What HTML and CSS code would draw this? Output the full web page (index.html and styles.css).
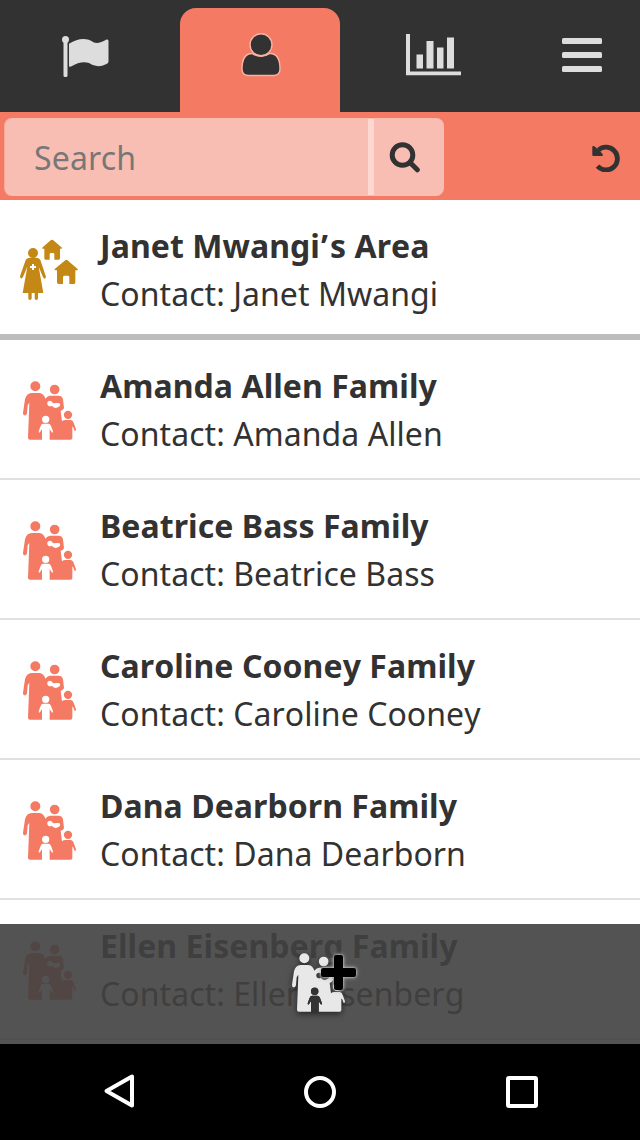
FILE: index.html
```html
<!DOCTYPE html>
<html lang="en">
<head>
<meta charset="utf-8">
<title>Contacts</title>
<link rel="stylesheet" href="styles.css">
</head>
<body>
<svg class="defs" width="0" height="0">
  <symbol id="family" viewBox="30 30 180 180">
    <path d="M76 34a15 15 0 1 1 0 30a15 15 0 1 1 0-30ZM134 44a14.500 14.500 0 1 1 0 29a14.500 14.500 0 1 1 0-29ZM174 122a12.500 12.500 0 1 1 0 25a12.500 12.500 0 1 1 0-25Z"/>
    <path fill-rule="evenodd" d="M65 69H88Q102 71 106 86Q111 78 120 77H146Q157 78 159 88L162 114Q162 119 152 123L156 154Q160 150 166 150H183Q190 152 192 161L198 178Q199 183 194 183L189 170H187V204Q187 209 182 209H60Q54 209 54 203L58 98L53 106L51 130Q49 137 43 136Q38 134 39 128L45 88Q49 70 65 69ZM99 161H115Q121 161 123 168L129 184Q129 191 125 187L119 177V209H96V177L90 187Q86 191 86 184L92 168Q94 161 99 161ZM107 137a11 11 0 1 0 0 22a11 11 0 1 0 0-22ZM120 92a8.500 8.500 0 1 0 5 15.500Q134 119 149 109Q154 99 144 99L129 100Q127 92 120 92Z"/>
  </symbol>
</svg>
<div class="screen">
  <header class="tabs">
    <a class="tab tab-flag"><svg width="48" height="44" viewBox="0 0 48 44"><circle cx="3.500" cy="3.500" r="3.500"/><rect x="1.500" y="3" width="4" height="38" rx="1.500"/><path d="M7 7.800Q21 -1 32 6.500Q37 8 44.500 3.500Q46.500 3 46.500 5V25.500Q46.500 27 44.500 28Q35 33 27 27Q19 24.500 9 30.500Q7 31.500 7 29.500Z"/></svg></a>
    <a class="tab tab-person"><svg width="42" height="46" viewBox="0 0 42 46"><path d="M12 21.500C5 21.500 2 28 2 37Q2 43 8 43.500H34Q40 43 40 37C40 28 37 21.500 30 21.500Q21 27 12 21.500Z"/><circle cx="21" cy="12.800" r="11"/></svg></a>
    <a class="tab tab-chart"><svg width="55" height="42" viewBox="0 0 55 42"><path d="M0 0H4V37.500H55V41.200H0ZM10.500 20.500H17V34.500H10.500ZM20.500 7H27.500V34.500H20.500ZM31 13.500H37.500V34.500H31ZM41 3.500H48V34.500H41Z"/></svg></a>
    <a class="tab tab-menu"><svg width="40" height="34" viewBox="0 0 40 34"><rect width="40" height="6" rx="1.500"/><rect y="14" width="40" height="6" rx="1.500"/><rect y="28" width="40" height="6" rx="1.500"/></svg></a>
  </header>
  <div class="toolbar">
    <div class="search">
      <input class="search-input" type="text" placeholder="Search">
      <span class="separator"></span>
      <button class="search-button" aria-label="Search"><svg width="32" height="32" viewBox="0 0 32 32"><circle cx="13.500" cy="14" r="10.300"/><path d="M21 21.500L28.300 28.800"/></svg></button>
    </div>
    <button class="reset" aria-label="Reset"><svg width="30" height="30" viewBox="0 0 30 30"><path class="arc" d="M7.500 8A11.400 11.400 0 1 1 6.500 24.200"/><path d="M1.300 5Q1.300 3.500 3 4L6 6.500L9 9L11.500 12Q12.500 14 10.500 14H2.500Q1.300 14 1.300 13Z"/></svg></button>
  </div>
  <main class="contacts">
    <div class="contact area">
      <svg class="icon" viewBox="30 45 180 180"><path d="M69 69a15 15 0 1 1 0 30a15 15 0 1 1 0-30ZM58 98H80Q88 99 91 105L107 152Q109 158 105 161Q101 161 99 157L86 125L100 204H84V220Q84 225 79 225Q74 225 74 220V204H65V220Q65 225 60 225Q55 225 55 220V204H38L52 125L39 156Q37 161 32 160Q29 157 31 151L47 105Q50 99 58 98Z"/><path class="cross" d="M66 117H72V123H78V129H72V135H66V129H60V123H66Z"/><path d="M126 44Q128 44 130 46L156 68Q157 70 153 71H150V100Q150 104 146 104H133V88Q133 84 129 84H123Q119 84 119 88V104H106Q103 104 103 100V71H98Q95 70 98 67L122 46Q124 44 126 44ZM169 104Q171 104 174 107L203 132Q205 135 201 136H196V172Q196 177 192 177H178V157Q178 152 174 152H163Q159 152 159 157V177H146Q141 177 141 172V136H136Q132 135 135 131L164 107Q167 104 169 104Z"/></svg>
      <div class="text"><h2>Janet Mwangi<span class="apostrophe">’</span>s Area</h2><p>Contact: Janet Mwangi</p></div>
    </div>
    <div class="contact"><svg class="icon"><use href="#family"/></svg><div class="text"><h2>Amanda Allen Family</h2><p>Contact: Amanda Allen</p></div></div>
    <div class="contact"><svg class="icon"><use href="#family"/></svg><div class="text"><h2>Beatrice Bass Family</h2><p>Contact: Beatrice Bass</p></div></div>
    <div class="contact"><svg class="icon"><use href="#family"/></svg><div class="text"><h2>Caroline Cooney Family</h2><p>Contact: Caroline Cooney</p></div></div>
    <div class="contact"><svg class="icon"><use href="#family"/></svg><div class="text"><h2>Dana Dearborn Family</h2><p>Contact: Dana Dearborn</p></div></div>
    <div class="contact"><svg class="icon"><use href="#family"/></svg><div class="text"><h2>Ellen Eisenberg Family</h2><p>Contact: Ellen Eisenberg</p></div></div>
    <div class="actions">
      <div class="add"><svg class="add-family" width="60" height="60"><use href="#family"/><path class="add-child" d="M25.700 35.500a3.800 3.800 0 1 1 0 7.600a3.800 3.800 0 1 1 0-7.600ZM23 43.700H28.500Q30 44 31 46L33 51.500Q32.500 53 31.500 52L29.700 49V59.700H22V49L20 52Q19 53 18.700 51.500L20.500 46Q21.500 44 23 43.700Z"/></svg><svg class="plus" width="40" height="40" viewBox="0 0 40 40"><path d="M17 2H23Q25 2 25 4V15H36Q38 15 38 17V22Q38 24 36 24H25V35Q25 37 23 37H18Q16 37 16 35V24H5Q3 24 3 22V17Q3 15 5 15H16V4Q16 2 18 2Z"/></svg></div>
    </div>
  </main>
  <nav class="system">
    <svg width="34" height="38" viewBox="0 0 34 38"><path d="M31 3.500V32.500L5.500 18Z"/></svg>
    <svg width="34" height="34" viewBox="0 0 34 34"><circle cx="17" cy="17" r="14"/></svg>
    <svg width="34" height="34" viewBox="0 0 34 34"><rect x="3" y="3" width="28" height="28" rx="1"/></svg>
  </nav>
</div>
</body>
</html>
```
FILE: styles.css
```css
* { box-sizing: border-box; }
body { margin: 0; color: #323232; font-family: "Noto Sans", sans-serif; font-kerning: none; }
svg { display: block; flex: none; }
.defs { position: absolute; }
button { border: 0; padding: 0; background: none; }
.screen { width: 640px; height: 1140px; display: flex; flex-direction: column; overflow: hidden; background: #fff; }
.tabs { height: 112px; flex: none; display: flex; padding-top: 8px; background: #323232; fill: #ddd; }
.tab { width: 160px; height: 104px; flex: none; }
.tab-flag { width: 180px; padding: 28px 0 0 62px; }
.tab-person { padding: 24px 0 0 60px; background: #f47a63; border-radius: 16px 16px 0 0; fill: #323232; stroke: #f9b3a5; stroke-width: 1.4; }
.tab-chart { width: 184px; padding: 26px 0 0 66px; }
.tab-menu { width: 116px; padding: 30px 0 0 38px; }
.toolbar { height: 88px; flex: none; display: flex; justify-content: space-between; align-items: center; padding: 2px 19px 0 4px; background: #f47a63; }
.search { width: 440px; height: 78px; display: flex; align-items: center; border: 1px solid #f8aa9b; border-width: 0 0 0 1px; border-radius: 8px; background: #f8beb3; }
.search-input { width: 363px; height: 78px; padding: 0 0 0 29px; border: 0; outline: 0; background: none; font: 32px "Noto Sans", sans-serif; letter-spacing: .15px; }
.search-input::placeholder { color: #777; opacity: 1; }
.separator { width: 6px; height: 76px; background: #fcd8d0; }
.search-button { flex: 1; padding-left: 15px; }
.search-button svg { fill: none; stroke: #323232; stroke-width: 5; stroke-linecap: round; }
.reset { fill: #323232; }
.reset .arc { fill: none; stroke: #323232; stroke-width: 4.8; }
.contacts { height: 844px; flex: none; position: relative; overflow: hidden; }
.contact { height: 140px; display: flex; gap: 20px; padding: 22px 20px 0; border-bottom: 2px solid #e0e0e0; }
.contact.area { border-bottom: 6px solid #bdbdbd; }
.icon { width: 60px; height: 60px; margin-top: 18px; fill: #f47a63; }
.area .icon { fill: #c38816; overflow: visible; }
.area .cross { fill: #fff; }
.text h2, .text p { margin: 0; font-size: 32px; line-height: 48px; white-space: nowrap; letter-spacing: .06px; }
.text h2 { font-weight: 700; }
.text p { font-weight: 400; }
.apostrophe { margin: 0 2px 0 1px; }
.actions { position: absolute; left: 0; right: 0; bottom: 0; height: 120px; display: flex; justify-content: center; padding-top: 28px; background: rgba(64, 64, 64, .9); }
.add { width: 62px; position: relative; }
.add-family { fill: #e8e8e8; filter: drop-shadow(0 2px 3px #222); }
.add-child { fill: #333; }
.plus { position: absolute; left: 29px; top: 1px; filter: drop-shadow(0 0 1px #ccc) drop-shadow(0 0 2px #aaa); }
.system { height: 96px; flex: none; display: flex; justify-content: space-between; align-items: center; padding: 0 101px; background: #000; }
.system svg { fill: none; stroke: #fff; stroke-width: 4; stroke-linejoin: round; }
```
